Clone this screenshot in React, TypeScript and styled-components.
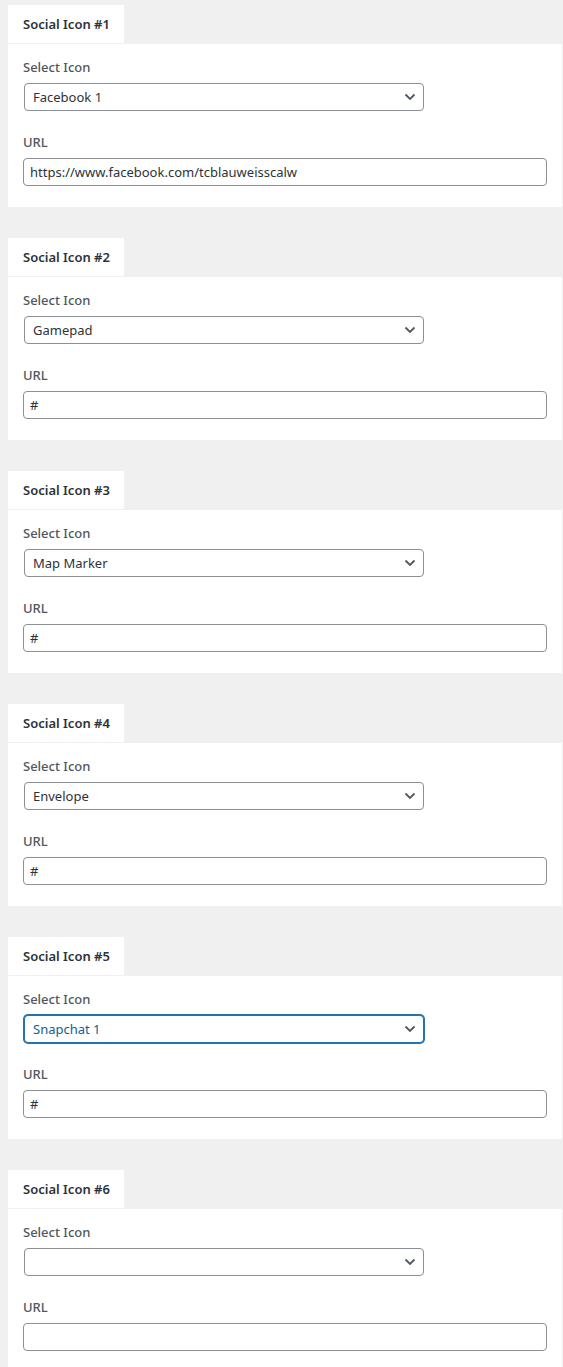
import React from "react";
import styled, { createGlobalStyle } from "styled-components";

const GlobalStyle = createGlobalStyle`
  html, body {
    margin: 0;
    padding: 0;
    background: #f0f0f0;
  }
  body {
    font-family: "Noto Sans", "Open Sans", sans-serif;
    color: #2c3338;
  }
`;

const Page = styled.div`
  display: flex;
  flex-direction: column;
  gap: 31px;
  padding: 5px 1px 0 8px;
`;

const Section = styled.section`
  display: flex;
  flex-direction: column;
`;

const Tab = styled.div`
  align-self: flex-start;
  width: 116px;
  height: 39px;
  box-sizing: border-box;
  padding: 0 0 0 15px;
  display: flex;
  align-items: center;
  background: #fff;
  font-size: 13px;
  font-weight: 600;
  color: #2c3338;
  border-bottom: 1px solid #f0f0f1;
`;

const Body = styled.div`
  background: #fff;
  padding: 13px 15px 21px 15px;
  display: flex;
  flex-direction: column;
`;

const Field = styled.div<{ $spaced?: boolean }>`
  display: flex;
  flex-direction: column;
  margin-top: ${(p) => (p.$spaced ? "21px" : "0")};
`;

const Label = styled.label`
  display: block;
  font-size: 13px;
  line-height: 20px;
  font-weight: 500;
  color: #50575e;
  margin-bottom: 6px;
`;

const SelectWrap = styled.div`
  position: relative;
  width: 400px;
  margin-left: 1px;
`;

const Select = styled.select<{ $focus?: boolean }>`
  appearance: none;
  -webkit-appearance: none;
  width: 100%;
  height: 28px;
  box-sizing: border-box;
  padding: 0 24px 0 8px;
  font-family: inherit;
  font-size: 13px;
  background: #fff;
  border-radius: 4px;
  border: 1px solid ${(p) => (p.$focus ? "#2271b1" : "#8c8f94")};
  box-shadow: ${(p) => (p.$focus ? "0 0 0 1px #2271b1" : "none")};
  color: ${(p) => (p.$focus ? "#135e96" : "#2c3338")};
  outline: none;
`;

const Chevron = styled.svg`
  position: absolute;
  right: 8px;
  top: 10px;
  pointer-events: none;
`;

const Input = styled.input`
  width: 524px;
  height: 28px;
  box-sizing: border-box;
  padding: 0 6px;
  font-family: inherit;
  font-size: 13px;
  color: #2c3338;
  background: #fff;
  border: 1px solid #8c8f94;
  border-radius: 4px;
  outline: none;
`;

type Item = { icon: string; url: string; focus?: boolean };

const items: Item[] = [
  { icon: "Facebook 1", url: "https://www.facebook.com/tcblauweisscalw" },
  { icon: "Gamepad", url: "#" },
  { icon: "Map Marker", url: "#" },
  { icon: "Envelope", url: "#" },
  { icon: "Snapchat 1", url: "#", focus: true },
  { icon: "", url: "" },
];

const SocialIcon = ({ n, item }: { n: number; item: Item }) => (
  <Section>
    <Tab>Social Icon #{n}</Tab>
    <Body>
      <Field>
        <Label>Select Icon</Label>
        <SelectWrap>
          <Select $focus={item.focus} value={item.icon} onChange={() => {}}>
            <option value=""></option>
            {item.icon && <option value={item.icon}>{item.icon}</option>}
          </Select>
          <Chevron width="12" height="8" viewBox="0 0 12 8">
            <polyline
              points="1.5,1.5 6,6 10.5,1.5"
              fill="none"
              stroke="#50575e"
              strokeWidth="1.8"
            />
          </Chevron>
        </SelectWrap>
      </Field>
      <Field $spaced>
        <Label>URL</Label>
        <Input value={item.url} onChange={() => {}} />
      </Field>
    </Body>
  </Section>
);

export default function App() {
  return (
    <>
      <GlobalStyle />
      <Page>
        {items.map((item, i) => (
          <SocialIcon key={i} n={i + 1} item={item} />
        ))}
      </Page>
    </>
  );
}
